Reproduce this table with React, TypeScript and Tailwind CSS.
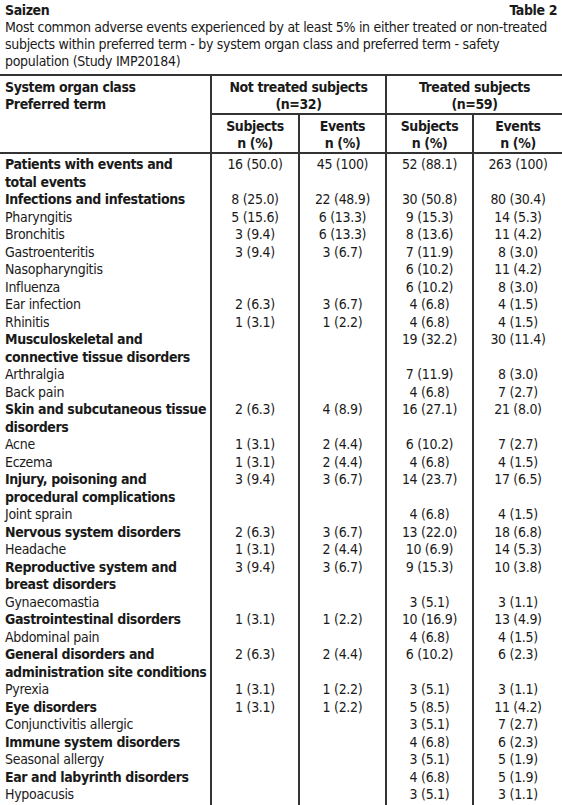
const font = { fontFamily: '"Liberation Sans Narrow", "DejaVu Sans Condensed", "Liberation Sans", sans-serif' };

type Row = { label: string[]; bold?: boolean; v: string[] };

const rows: Row[] = [
  { label: ["Patients with events and", "total events"], bold: true, v: ["16 (50.0)", "45 (100)", "52 (88.1)", "263 (100)"] },
  { label: ["Infections and infestations"], bold: true, v: ["8 (25.0)", "22 (48.9)", "30 (50.8)", "80 (30.4)"] },
  { label: ["Pharyngitis"], v: ["5 (15.6)", "6 (13.3)", "9 (15.3)", "14 (5.3)"] },
  { label: ["Bronchitis"], v: ["3 (9.4)", "6 (13.3)", "8 (13.6)", "11 (4.2)"] },
  { label: ["Gastroenteritis"], v: ["3 (9.4)", "3 (6.7)", "7 (11.9)", "8 (3.0)"] },
  { label: ["Nasopharyngitis"], v: ["", "", "6 (10.2)", "11 (4.2)"] },
  { label: ["Influenza"], v: ["", "", "6 (10.2)", "8 (3.0)"] },
  { label: ["Ear infection"], v: ["2 (6.3)", "3 (6.7)", "4 (6.8)", "4 (1.5)"] },
  { label: ["Rhinitis"], v: ["1 (3.1)", "1 (2.2)", "4 (6.8)", "4 (1.5)"] },
  { label: ["Musculoskeletal and", "connective tissue disorders"], bold: true, v: ["", "", "19 (32.2)", "30 (11.4)"] },
  { label: ["Arthralgia"], v: ["", "", "7 (11.9)", "8 (3.0)"] },
  { label: ["Back pain"], v: ["", "", "4 (6.8)", "7 (2.7)"] },
  { label: ["Skin and subcutaneous tissue", "disorders"], bold: true, v: ["2 (6.3)", "4 (8.9)", "16 (27.1)", "21 (8.0)"] },
  { label: ["Acne"], v: ["1 (3.1)", "2 (4.4)", "6 (10.2)", "7 (2.7)"] },
  { label: ["Eczema"], v: ["1 (3.1)", "2 (4.4)", "4 (6.8)", "4 (1.5)"] },
  { label: ["Injury, poisoning and", "procedural complications"], bold: true, v: ["3 (9.4)", "3 (6.7)", "14 (23.7)", "17 (6.5)"] },
  { label: ["Joint sprain"], v: ["", "", "4 (6.8)", "4 (1.5)"] },
  { label: ["Nervous system disorders"], bold: true, v: ["2 (6.3)", "3 (6.7)", "13 (22.0)", "18 (6.8)"] },
  { label: ["Headache"], v: ["1 (3.1)", "2 (4.4)", "10 (6.9)", "14 (5.3)"] },
  { label: ["Reproductive system and", "breast disorders"], bold: true, v: ["3 (9.4)", "3 (6.7)", "9 (15.3)", "10 (3.8)"] },
  { label: ["Gynaecomastia"], v: ["", "", "3 (5.1)", "3 (1.1)"] },
  { label: ["Gastrointestinal disorders"], bold: true, v: ["1 (3.1)", "1 (2.2)", "10 (16.9)", "13 (4.9)"] },
  { label: ["Abdominal pain"], v: ["", "", "4 (6.8)", "4 (1.5)"] },
  { label: ["General disorders and", "administration site conditions"], bold: true, v: ["2 (6.3)", "2 (4.4)", "6 (10.2)", "6 (2.3)"] },
  { label: ["Pyrexia"], v: ["1 (3.1)", "1 (2.2)", "3 (5.1)", "3 (1.1)"] },
  { label: ["Eye disorders"], bold: true, v: ["1 (3.1)", "1 (2.2)", "5 (8.5)", "11 (4.2)"] },
  { label: ["Conjunctivitis allergic"], v: ["", "", "3 (5.1)", "7 (2.7)"] },
  { label: ["Immune system disorders"], bold: true, v: ["", "", "4 (6.8)", "6 (2.3)"] },
  { label: ["Seasonal allergy"], v: ["", "", "3 (5.1)", "5 (1.9)"] },
  { label: ["Ear and labyrinth disorders"], bold: true, v: ["", "", "4 (6.8)", "5 (1.9)"] },
  { label: ["Hypoacusis"], v: ["", "", "3 (5.1)", "3 (1.1)"] },
];

export default function App() {
  return (
    <div className="w-[562px] h-[805px] bg-white text-[#1a1a1a] text-[14px] tracking-[-0.3px] leading-[17px] overflow-hidden" style={font}>
      {/* Title block */}
      <div className="px-[5px] pt-[2px] h-[74px] whitespace-nowrap">
        <div className="flex justify-between font-bold tracking-[-0.4px]">
          <span>Saizen</span>
          <span>Table 2</span>
        </div>
        <p>
          Most common adverse events experienced by at least 5% in either treated or non-treated
          <br />
          subjects within preferred term - by system organ class and preferred term - safety
          <br />
          population (Study IMP20184)
        </p>
      </div>

      <table className="w-[562px] table-fixed border-collapse border-t-2 border-b-2 border-[#333]">
        <colgroup>
          <col className="w-[211px]" />
          <col className="w-[88px]" />
          <col className="w-[87px]" />
          <col className="w-[87px]" />
          <col className="w-[89px]" />
        </colgroup>
        <thead className="font-bold tracking-[-0.4px]">
          <tr className="h-[38px]">
            <td rowSpan={2} className="align-top pl-[5px] pt-[3px] border-b-2 border-[#333]">
              System organ class
              <br />
              Preferred term
            </td>
            <th colSpan={2} className="font-bold text-center align-top pt-[3px] border-l-2 border-b-2 border-[#333]">
              Not treated subjects
              <br />
              (n=32)
            </th>
            <th colSpan={2} className="font-bold text-center align-top pt-[3px] border-l-2 border-b-2 border-[#333]">
              Treated subjects
              <br />
              (n=59)
            </th>
          </tr>
          <tr className="h-[38px]">
            {["Subjects", "Events", "Subjects", "Events"].map((h, i) => (
              <th key={i} className="font-bold text-center align-top pt-[3px] border-l-2 border-b-2 border-[#333]">
                {h}
                <br />
                n (%)
              </th>
            ))}
          </tr>
        </thead>
        <tbody className="leading-[17.5px]">
          {rows.map((r, i) => (
            <tr key={i}>
              <td className={`align-top pl-[5px] whitespace-nowrap ${r.bold ? "font-bold tracking-[-0.4px]" : ""} ${i === 0 ? "pt-[2px]" : ""} ${i === rows.length - 1 ? "pb-[2px]" : ""}`}>
                {r.label.map((l, j) => (
                  <div key={j}>{l}</div>
                ))}
              </td>
              {r.v.map((val, j) => (
                <td key={j} className={`align-top text-center border-l-2 border-[#333] whitespace-nowrap ${i === 0 ? "pt-[2px]" : ""}`}>
                  {val}
                </td>
              ))}
            </tr>
          ))}
        </tbody>
      </table>
    </div>
  );
}
